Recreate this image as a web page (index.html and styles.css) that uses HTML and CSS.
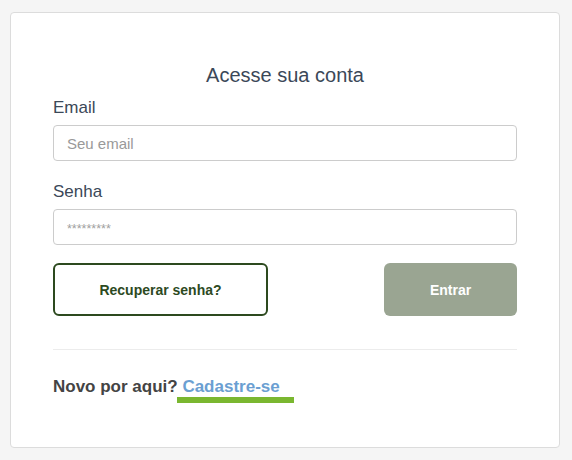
FILE: index.html
```html
<!DOCTYPE html>
<html lang="pt-BR">
<head>
<meta charset="utf-8">
<title>Acesse sua conta</title>
<link rel="stylesheet" href="styles.css">
</head>
<body>
<div class="card">
  <h1 class="title">Acesse sua conta</h1>
  <form class="form">
    <div class="group">
      <label class="label" for="email">Email</label>
      <input class="input" id="email" type="email" placeholder="Seu email">
    </div>
    <div class="group">
      <label class="label" for="senha">Senha</label>
      <input class="input input-pass" id="senha" type="password" placeholder="*********">
    </div>
    <div class="actions">
      <button type="button" class="btn btn-outline">Recuperar senha?</button>
      <button type="submit" class="btn btn-primary">Entrar</button>
    </div>
  </form>
  <hr class="divider">
  <p class="signup">Novo por aqui? <a class="signup-link" href="#">Cadastre-se</a></p>
</div>
</body>
</html>
```
FILE: styles.css
```css
html, body {
  margin: 0;
  padding: 0;
  background: #f5f5f5;
  font-family: "Liberation Sans", Arial, sans-serif;
}
body {
  padding: 12px 12px 14px 10px;
}
.card {
  background: #fff;
  border: 1px solid #dcdcdc;
  border-radius: 4px;
  padding: 50px 42px 50px;
  box-sizing: border-box;
  width: 550px;
}
.title {
  margin: 0 0 11px;
  font-size: 20px;
  line-height: 24px;
  font-weight: normal;
  text-align: center;
  color: #3b4858;
}
.form {
  margin: 0;
}
.group {
  margin-bottom: 21px;
}
.group + .group {
  margin-bottom: 18px;
}
.label {
  display: block;
  font-size: 17px;
  line-height: 19px;
  color: #3b4858;
  margin-bottom: 8px;
}
.input {
  display: block;
  box-sizing: border-box;
  width: 100%;
  height: 36px;
  border: 1px solid #cccccc;
  border-radius: 4px;
  padding: 0 13px;
  font-family: "Liberation Sans", Arial, sans-serif;
  font-size: 15px;
  color: #333;
  background: #fff;
  outline: none;
}
.input::placeholder {
  color: #999;
}
.input-pass::placeholder {
  font-size: 12.5px;
  color: #a0a0a0;
}
.actions {
  display: flex;
  justify-content: space-between;
}
.btn {
  box-sizing: border-box;
  height: 53px;
  border-radius: 6px;
  font-family: "Liberation Sans", Arial, sans-serif;
  font-size: 14px;
  font-weight: bold;
  cursor: pointer;
  padding: 0;
}
.btn-outline {
  width: 215px;
  background: #fff;
  border: 2px solid #2d4a1f;
  color: #2d4a1f;
}
.btn-primary {
  width: 133px;
  background: #9aa592;
  border: none;
  color: #fff;
}
.divider {
  border: 0;
  border-top: 1px solid #ececec;
  margin: 33px 0 27px;
}
.signup {
  margin: 0;
  font-size: 17px;
  line-height: 20px;
  font-weight: bold;
  color: #444;
}
.signup-link {
  position: relative;
  color: #6b9fd2;
  text-decoration: none;
}
.signup-link::after {
  content: "";
  position: absolute;
  left: -5px;
  right: -14px;
  top: 20px;
  height: 6px;
  background: #7ab730;
}
```
